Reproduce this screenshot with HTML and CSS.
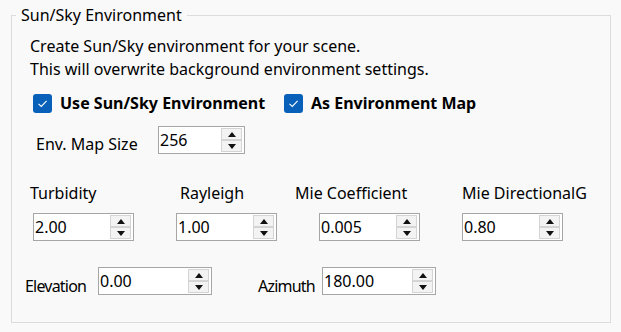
FILE: index.html
```html
<!DOCTYPE html>
<html>
<head>
<meta charset="utf-8">
<link rel="stylesheet" href="styles.css">
</head>
<body>
<fieldset class="group">
  <legend class="group-title">Sun/Sky Environment</legend>
  <div class="intro">
    <div>Create Sun/Sky environment for your scene.</div>
    <div>This will overwrite background environment settings.</div>
  </div>
  <div class="checks">
    <label class="check check-first"><span class="box"><svg viewBox="0 0 19 19" width="19" height="19"><path d="M5.5 9.8 L8.3 12.4 L13.6 6.8" fill="none" stroke="#fff" stroke-width="1.1"/></svg></span><span class="check-text">Use Sun/Sky Environment</span></label>
    <label class="check"><span class="box"><svg viewBox="0 0 19 19" width="19" height="19"><path d="M5.5 9.8 L8.3 12.4 L13.6 6.8" fill="none" stroke="#fff" stroke-width="1.1"/></svg></span><span class="check-text">As Environment Map</span></label>
  </div>
  <div class="env-row">
    <span class="lbl env-lbl">Env. Map Size</span>
    <div class="spin spin-env"><span class="val">256</span><span class="btns"><span class="btn up"></span><span class="btn down"></span></span></div>
  </div>
  <div class="param-labels">
    <span class="lbl pl1">Turbidity</span>
    <span class="lbl pl2">Rayleigh</span>
    <span class="lbl pl3">Mie Coefficient</span>
    <span class="lbl pl4">Mie DirectionalG</span>
  </div>
  <div class="param-spins">
    <div class="spin spin-p"><span class="val">2.00</span><span class="btns"><span class="btn up"></span><span class="btn down"></span></span></div>
    <div class="spin spin-p"><span class="val">1.00</span><span class="btns"><span class="btn up"></span><span class="btn down"></span></span></div>
    <div class="spin spin-p"><span class="val">0.005</span><span class="btns"><span class="btn up"></span><span class="btn down"></span></span></div>
    <div class="spin spin-p"><span class="val">0.80</span><span class="btns"><span class="btn up"></span><span class="btn down"></span></span></div>
  </div>
  <div class="angle-row">
    <span class="lbl narrow elev-lbl">Elevation</span>
    <div class="spin spin-a"><span class="val">0.00</span><span class="btns"><span class="btn up"></span><span class="btn down"></span></span></div>
    <span class="lbl narrow azi-lbl">Azimuth</span>
    <div class="spin spin-a"><span class="val">180.00</span><span class="btns"><span class="btn up"></span><span class="btn down"></span></span></div>
  </div>
</fieldset>
</body>
</html>
```

FILE: styles.css
```css
html, body {
  margin: 0;
  background: #f9f9f9;
}
body {
  padding: 5px 10px 0 11px;
  font-family: "Noto Sans", "Open Sans", sans-serif;
  font-size: 16px;
  color: #000;
}
.group {
  margin: 0;
  box-sizing: border-box;
  width: 600px;
  height: 318px;
  border: 1px solid #dcdcdc;
  padding: 0 0 0 18px;
}
.group-title {
  padding: 0 5px;
  margin-left: -14px;
  line-height: 20px;
}
.intro {
  margin-top: 10px;
  line-height: 23px;
}
.checks {
  display: flex;
  align-items: center;
  margin-top: 12px;
  margin-left: 3px;
  height: 20px;
}
.check {
  display: flex;
  align-items: center;
}
.check-first {
  width: 251px;
}
.box {
  width: 19px;
  height: 19px;
  border-radius: 3px;
  background: #0860b8;
  display: flex;
}
.check-text {
  margin-left: 8px;
  font-weight: bold;
}
.lbl {
  line-height: 20px;
  white-space: nowrap;
}
.narrow {
  letter-spacing: -0.8px;
}
.env-row {
  display: flex;
  align-items: center;
  margin-top: 13px;
  margin-left: 6px;
}
.env-lbl {
  padding-top: 8px;
  width: 122px;
}
.spin {
  box-sizing: border-box;
  height: 28px;
  border: 1px solid #a6a6a6;
  background: #fff;
  display: flex;
  padding: 1px 2px 1px 0;
}
.val {
  flex: 1;
  padding-left: 1px;
  line-height: 24px;
}
.btns {
  display: flex;
  flex-direction: column;
  width: 21px;
}
.btn {
  flex: 1;
  box-sizing: border-box;
  border: 1px solid #d4d4d4;
  background: #f3f3f3;
  display: flex;
  align-items: center;
  justify-content: center;
}
.btn.up::after {
  content: "";
  border-left: 4px solid transparent;
  border-right: 4px solid transparent;
  border-bottom: 5px solid #111;
}
.btn.down::after {
  content: "";
  border-left: 4px solid transparent;
  border-right: 4px solid transparent;
  border-top: 5px solid #111;
}
.spin-env {
  width: 87px;
}
.param-labels {
  display: flex;
  margin-top: 29px;
}
.pl1 { width: 150px; }
.pl2 { width: 115px; }
.pl3 { width: 167px; }
.param-spins {
  display: flex;
  gap: 42px;
  margin-top: 10px;
  margin-left: 3px;
}
.spin-p {
  width: 101px;
}
.angle-row {
  display: flex;
  align-items: center;
  margin-top: 25px;
  margin-left: -5px;
}
.elev-lbl {
  padding-top: 10px;
  width: 73px;
}
.azi-lbl {
  padding-top: 10px;
  margin-left: 46px;
  width: 64px;
}
.spin-a {
  width: 114px;
}
```
